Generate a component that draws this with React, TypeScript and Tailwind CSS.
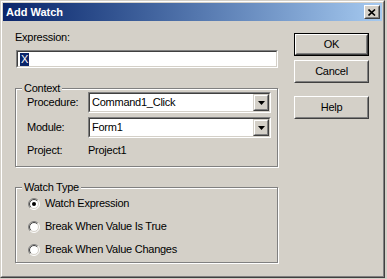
import React from "react";

function Sunken({ className, children }: { className: string; children?: React.ReactNode }) {
  return (
    <div className={`border border-t-[#808080] border-l-[#808080] border-b-white border-r-white ${className}`}>
      <div className="w-full h-full border border-t-[#404040] border-l-[#404040] border-b-[#d4d0c8] border-r-[#d4d0c8] bg-white flex items-center">
        {children}
      </div>
    </div>
  );
}

function Button({ label, def, className }: { label: string; def?: boolean; className: string }) {
  const inner = (
    <div className="w-full h-full border border-t-white border-l-white border-b-[#404040] border-r-[#404040]">
      <div className="w-full h-full border border-t-[#d4d0c8] border-l-[#d4d0c8] border-b-[#808080] border-r-[#808080] flex items-center justify-center text-black">
        {label}
      </div>
    </div>
  );
  return (
    <div className={`w-[75px] h-[23px] ${def ? "border border-black" : ""} ${className}`}>{inner}</div>
  );
}

function DropBtn() {
  return (
    <div className="w-[16px] h-full border border-t-[#d4d0c8] border-l-[#d4d0c8] border-b-[#404040] border-r-[#404040]">
      <div className="w-full h-full border border-t-white border-l-white border-b-[#808080] border-r-[#808080] bg-[#d4d0c8] flex items-center justify-center">
        <svg width="7" height="4" viewBox="0 0 7 4">
          <path d="M0 0H7L3.5 4Z" fill="#000" />
        </svg>
      </div>
    </div>
  );
}

function Combo({ value }: { value: string }) {
  return (
    <Sunken className="w-[183px] h-[21px]">
      <div className="flex-1 pl-[2px] leading-[17px]">{value}</div>
      <DropBtn />
    </Sunken>
  );
}

function Radio({ checked }: { checked?: boolean }) {
  const a = 0.7071;
  const p = (r: number, s: number) => `${6 + s * r * a} ${6 - s * r * a}`;
  return (
    <svg width="12" height="12" viewBox="0 0 12 12" className="shrink-0">
      <circle cx="6" cy="6" r="5" fill="#fff" />
      <path d={`M${6 - 5.5 * a} ${6 + 5.5 * a}A5.5 5.5 0 0 1 ${p(5.5, 1)}`} stroke="#808080" fill="none" />
      <path d={`M${p(5.5, 1)}A5.5 5.5 0 0 1 ${6 - 5.5 * a} ${6 + 5.5 * a}`} stroke="#fff" fill="none" />
      <path d={`M${6 - 4.5 * a} ${6 + 4.5 * a}A4.5 4.5 0 0 1 ${p(4.5, 1)}`} stroke="#404040" fill="none" />
      <path d={`M${p(4.5, 1)}A4.5 4.5 0 0 1 ${6 - 4.5 * a} ${6 + 4.5 * a}`} stroke="#d4d0c8" fill="none" />
      {checked && <circle cx="6" cy="6" r="2" fill="#000" />}
    </svg>
  );
}

function Group({ title, className, children }: { title: string; className: string; children?: React.ReactNode }) {
  return (
    <div className={`relative border border-[#808080] shadow-[inset_1px_1px_0_#fff,1px_1px_0_#fff] ${className}`}>
      <span className="absolute left-[6px] top-[-7px] px-[2px] bg-[#d4d0c8] leading-[13px]">{title}</span>
      {children}
    </div>
  );
}

export default function App() {
  return (
    <div className="w-[387px] h-[279px] bg-[#d4d0c8] font-['Liberation_Sans',Arial,sans-serif] text-[11px] tracking-[-0.25px] text-black">
      <div className="w-[385px] h-[278px] border border-t-[#d4d0c8] border-l-[#d4d0c8] border-b-[#404040] border-r-[#404040]">
        <div className="w-full h-full border border-t-white border-l-white border-b-[#808080] border-r-[#808080] p-[1px] flex flex-col">
          <div className="h-[18px] bg-gradient-to-r from-[#0a246a] to-[#a6caf0] flex items-center justify-between pl-[3px] pr-[2px]">
            <span className="text-white font-bold text-[11px] tracking-normal">Add Watch</span>
            <div className="w-[16px] h-[14px] border border-t-white border-l-white border-b-[#404040] border-r-[#404040]">
              <div className="w-full h-full border border-t-[#d4d0c8] border-l-[#d4d0c8] border-b-[#808080] border-r-[#808080] bg-[#d4d0c8] flex items-center justify-center">
                <svg width="8" height="7" viewBox="0 0 8 7">
                  <path d="M0.5 0.5L7 6.5M7 0.5L0.5 6.5" stroke="#000" strokeWidth="1.6" />
                </svg>
              </div>
            </div>
          </div>
          <div className="flex flex-1">
            <div className="ml-[12px] w-[263px] flex flex-col">
              <div className="mt-[10px] leading-[13px]">Expression:</div>
              <Sunken className="mt-[6px] ml-[1px] w-[262px] h-[18px]">
                <span className="ml-[2px] bg-[#0a246a] text-white leading-[13px] px-[1px]">X</span>
              </Sunken>
              <Group title="Context" className="mt-[20px] h-[79px]">
                <div className="flex flex-col pl-[11px] pt-[3px]">
                  <div className="flex items-center">
                    <span className="w-[61px]">Procedure:</span>
                    <Combo value="Command1_Click" />
                  </div>
                  <div className="flex items-center mt-[4px]">
                    <span className="w-[61px]">Module:</span>
                    <Combo value="Form1" />
                  </div>
                  <div className="flex items-center mt-[6px] leading-[13px]">
                    <span className="w-[61px]">Project:</span>
                    <span>Project1</span>
                  </div>
                </div>
              </Group>
              <Group title="Watch Type" className="mt-[20px] h-[76px]">
                <div className="flex flex-col pl-[12px] pt-[9px] gap-[10px]">
                  <div className="flex items-center gap-[5px] leading-[13px]">
                    <Radio checked />
                    <span>Watch Expression</span>
                  </div>
                  <div className="flex items-center gap-[5px] leading-[13px]">
                    <Radio />
                    <span>Break When Value Is True</span>
                  </div>
                  <div className="flex items-center gap-[5px] leading-[13px]">
                    <Radio />
                    <span>Break When Value Changes</span>
                  </div>
                </div>
              </Group>
            </div>
            <div className="ml-[16px] flex flex-col pt-[12px]">
              <Button label="OK" def />
              <Button label="Cancel" className="mt-[4px]" />
              <Button label="Help" className="mt-[13px]" />
            </div>
          </div>
        </div>
      </div>
    </div>
  );
}
